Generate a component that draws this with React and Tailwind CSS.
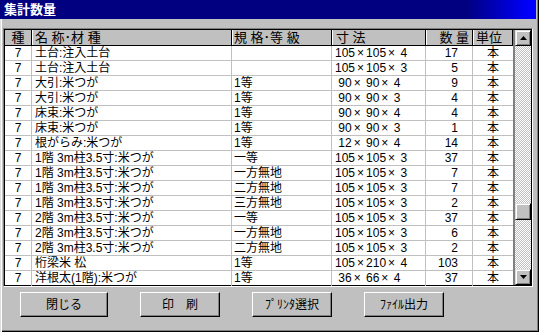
import React from "react";

const rows = [
  ["7", "土台:注入土台", "", "105×105× 4", "17"],
  ["7", "土台:注入土台", "", "105×105× 3", "5"],
  ["7", "大引:米つが", "1等", " 90× 90× 4", "9"],
  ["7", "大引:米つが", "1等", " 90× 90× 3", "4"],
  ["7", "床束:米つが", "1等", " 90× 90× 4", "4"],
  ["7", "床束:米つが", "1等", " 90× 90× 3", "1"],
  ["7", "根がらみ:米つが", "1等", " 12× 90× 4", "14"],
  ["7", "1階 3m柱3.5寸:米つが", "一等", "105×105× 3", "37"],
  ["7", "1階 3m柱3.5寸:米つが", "一方無地", "105×105× 3", "7"],
  ["7", "1階 3m柱3.5寸:米つが", "二方無地", "105×105× 3", "7"],
  ["7", "1階 3m柱3.5寸:米つが", "三方無地", "105×105× 3", "2"],
  ["7", "2階 3m柱3.5寸:米つが", "一等", "105×105× 3", "37"],
  ["7", "2階 3m柱3.5寸:米つが", "一方無地", "105×105× 3", "6"],
  ["7", "2階 3m柱3.5寸:米つが", "二方無地", "105×105× 3", "2"],
  ["7", "桁梁米 松", "1等", "105×210× 4", "103"],
  ["7", "洋根太(1階):米つが", "1等", " 36× 66× 4", "37"],
];

const cols = "grid grid-cols-[27px_200px_100px_94px_47px_40px]";
const raised =
  "bg-[#c0c0c0] border border-t-[#dfdfdf] border-l-[#dfdfdf] border-r-black border-b-black shadow-[inset_1px_1px_#ffffff,inset_-1px_-1px_#808080]";

function Arrow({ up }) {
  return (
    <svg width="7" height="4" viewBox="0 0 7 4">
      {up ? <path d="M3.5 0 L7 4 L0 4 Z" fill="#000" /> : <path d="M0 0 L7 0 L3.5 4 Z" fill="#000" />}
    </svg>
  );
}

function Head({ children, className = "" }) {
  return (
    <div className={`h-[15px] border-r border-r-black border-l border-l-white leading-[15px] text-[13px] whitespace-pre overflow-hidden ${className}`}>
      {children}
    </div>
  );
}

// dimension text: the × sign is drawn wide, as in the original bitmap font
function Dim({ text }) {
  const parts = text.split("×");
  return (
    <>
      {parts.map((p, i) => (
        <React.Fragment key={i}>
          {p}
          {i < parts.length - 1 && <span className="inline-block w-[11px] text-center">×</span>}
        </React.Fragment>
      ))}
    </>
  );
}

export default function App() {
  return (
    <div
      className="w-[539px] h-[332px] bg-[#c0c0c0] overflow-hidden text-black shadow-[inset_1px_0_#dfdfdf,inset_2px_0_#ffffff,inset_-1px_-1px_#000000,inset_-2px_-2px_#808080]"
      style={{ fontFamily: '"Liberation Sans", "Noto Sans CJK JP", sans-serif' }}
    >
      <div className="h-[19px] mr-[3px] flex items-center pl-[4px] bg-[linear-gradient(to_right,#000080_87%,#0000ff_99%)]">
        <span className="text-white font-bold text-[13px] leading-none">集計数量</span>
      </div>

      <div className="ml-[3px] mt-[9px] w-[530px] border border-t-[#808080] border-l-[#808080] border-r-white border-b-white">
        <div className="border border-black flex h-[257px]">
          <div className="w-[508px] bg-white text-[12px]">
            <div className={`${cols} bg-[#c0c0c0] border-b border-b-black`}>
              <Head className="text-center border-l-0">種</Head>
              <Head className="pl-[2px]">名 称･材 種</Head>
              <Head className="pl-[1px]">規 格･等 級</Head>
              <Head className="pl-[3px]">寸 法</Head>
              <Head className="text-right pr-[3px]">数 量</Head>
              <Head className="pl-[2px]">単位</Head>
            </div>
            {rows.map((r, i) => (
              <div
                key={i}
                className={`${cols} h-[15px] leading-[14px] ${i < rows.length - 1 ? "border-b border-b-[#c0c0c0]" : "h-[14px]"}`}
              >
                <div className="border-r border-r-[#c0c0c0] text-center">{r[0]}</div>
                <div className="border-r border-r-[#c0c0c0] pl-[3px] whitespace-pre">{r[1]}</div>
                <div className="border-r border-r-[#c0c0c0] pl-[2px]">{r[2]}</div>
                <div className="border-r border-r-[#c0c0c0] pl-[3px] whitespace-pre">
                  <Dim text={r[3]} />
                </div>
                <div className="border-r border-r-[#c0c0c0] text-right pr-[14px]">{r[4]}</div>
                <div className="text-center">本</div>
              </div>
            ))}
          </div>

          <div className="w-[18px] border-l-2 border-l-[#808080] flex flex-col">
            <div className={`h-[16px] flex items-center justify-center ${raised}`}>
              <Arrow up />
            </div>
            <div className="flex-1 bg-[repeating-conic-gradient(#ffffff_0_25%,#c0c0c0_0_50%)] bg-[length:2px_2px]">
              <div className={`mt-[157px] h-[17px] ${raised}`} />
            </div>
            <div className={`h-[16px] flex items-center justify-center ${raised}`}>
              <Arrow />
            </div>
          </div>
        </div>
      </div>

      <div className="flex gap-[32px] pl-[20px] mt-[5px] text-[12px]">
        {[
          ["閉じる", "w-[88px]"],
          ["印　刷", "w-[80px]"],
          ["ﾌﾟﾘﾝﾀ選択", "w-[80px]"],
          ["ﾌｧｲﾙ出力", "w-[80px]"],
        ].map(([label, w]) => (
          <button
            key={label}
            className={`${w} h-[25px] flex items-center justify-center bg-[#c0c0c0] border border-t-white border-l-white border-r-black border-b-black shadow-[inset_-1px_-1px_#808080] whitespace-pre`}
          >
            {label}
          </button>
        ))}
      </div>
    </div>
  );
}
